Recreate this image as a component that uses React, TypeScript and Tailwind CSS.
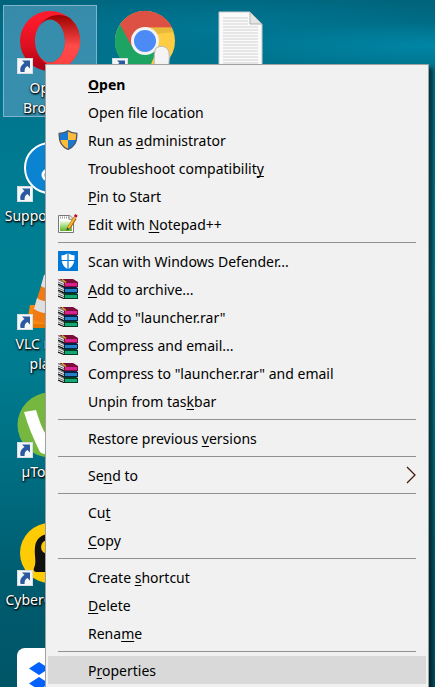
import type { ReactNode } from "react";
import clsx from "clsx";

const ShortcutArrow = () => (
	<g>
		<rect x="0" y="48" width="16" height="16" fill="#f4f6f8" />
		<rect x="0.5" y="48.5" width="15" height="15" fill="none" stroke="#d5dde3" />
		<path
			d="M5 50.500H13V58.500L10.400 56C8.300 57.200 7.300 59 7.600 62H3.600C2.500 58.200 4.200 54.800 7.500 53Z"
			fill="#2c5aa0"
		/>
	</g>
);

const OperaIcon = () => (
	<>
		<defs>
			<linearGradient id="operaLeft" x1="0" y1="0" x2="0" y2="1">
				<stop offset="0.1" stopColor="#ff1b2d" />
				<stop offset="0.6" stopColor="#dc1020" />
				<stop offset="1" stopColor="#a70014" />
			</linearGradient>
			<linearGradient id="operaRight" x1="0" y1="0" x2="0" y2="1">
				<stop offset="0" stopColor="#9c0000" />
				<stop offset="0.6" stopColor="#ff4b4b" />
				<stop offset="1" stopColor="#ff4040" />
			</linearGradient>
		</defs>
		<path
			fillRule="evenodd"
			d="M33 1A30 30 0 1 0 33 61A30 30 0 1 0 33 1ZM33 9.500C41 9.500 48 19 48 31C48 43 41 52.500 33 52.500C25 52.500 18 43 18 31C18 19 25 9.500 33 9.500Z"
			fill="url(#operaLeft)"
		/>
		<path
			d="M22.500 15.500C27 9 34 5 41 5C47 5 51 6.500 54 9A30 30 0 0 1 53 53.500C49 56 45 57.500 40 57C33 56.500 27 53 22.500 46.500C26 50.500 29.500 52.500 33 52.500C41 52.500 48 43 48 31C48 19 41 9.500 33 9.500C29.500 9.500 26 11.500 22.500 15.500Z"
			fill="url(#operaRight)"
		/>
	</>
);

const ChromeIcon = () => (
	<>
		<circle cx="33" cy="31" r="30" fill="#ffcd42" />
		<path d="M33 31L8 14.500A30 30 0 0 0 36 61L46 38Z" fill="#1da462" />
		<path d="M8 14.500A30 30 0 0 1 60 17.500H33L20 37Z" fill="#dd5145" />
		<path d="M33 17.500H60L62 22L45 24Z" fill="#c79a2e" opacity="0.4" />
		<circle cx="33" cy="31" r="14" fill="#f3f3f3" />
		<circle cx="33" cy="31" r="11" fill="#4c8bf5" />
		<path
			d="M44 38C49 35 55 36 57 42C58 49 56 55 57 64H42C43 55 41 43 44 38Z"
			fill="#f4f4f4"
			stroke="#b9b9b9"
		/>
	</>
);

const TextFileIcon = () => (
	<>
		<path d="M12 2H43L55 14V62H12Z" fill="#fafafa" stroke="#c9c9c9" />
		<path
			d="M16 8H41M16 11H41M16 14H41M16 17H51M16 20H51M16 23H51M16 26H51M16 29H51M16 32H51M16 35H51M16 38H51M16 41H51M16 44H51M16 47H51M16 50H51M16 53H51"
			stroke="#d2d2d2"
		/>
		<path d="M43 2V14H55Z" fill="#e4e4e4" stroke="#b0b0b0" />
	</>
);

const SupportIcon = () => (
	<>
		<circle cx="33" cy="30" r="25" fill="#0a84d0" stroke="#fff" strokeWidth="2" />
		<circle cx="31" cy="37" r="5" fill="none" stroke="#fff" strokeWidth="3" />
		<path d="M36 32V20" stroke="#fff" strokeWidth="3" />
	</>
);

const VlcIcon = () => (
	<>
		<path d="M13 39H53L60 62H9Z" fill="#f58a0c" />
		<path d="M9 58H60V62H9Z" fill="#e57700" />
		<path d="M30 1H36L51 52C43 59 23 59 14 52Z" fill="#f27a12" />
		<path d="M27 9H39L42 20C37 23 28 23 24 20Z" fill="#e2e2e2" />
		<path d="M20 32C27 37 39 37 46 32L49 44C41 49 25 49 17 43Z" fill="#dedede" />
	</>
);

const TorrentIcon = () => (
	<>
		<circle cx="33" cy="31" r="32.500" fill="#76b83f" />
		<path
			d="M7 18L19 16C22 26 25 35 30 42C36 46 42 42 41 34L35 14L47 12L58 50L40 56C36 60 28 62 23 58C17 46 11 32 7 18Z"
			fill="#fff"
		/>
	</>
);

const GhostIcon = () => (
	<>
		<circle cx="33" cy="31" r="30" fill="#ffcb05" />
		<path
			d="M17 46C20 40 17 34 18 25C19 16 25 12 33 12C42 12 48 18 48 27V50H20C18 50 16 49 17 46Z"
			fill="#111"
		/>
		<circle cx="31" cy="25" r="7" fill="#ffcb05" />
	</>
);

const DropboxIcon = () => (
	<>
		<rect x="0" y="-2" width="66" height="66" rx="8" fill="#fff" />
		<path
			d="M22 12L32 18.500L22 25L12 18.500ZM44 12L54 18.500L44 25L34 18.500ZM22 27L32 33.500L22 40L12 33.500ZM44 27L54 33.500L44 40L34 33.500ZM33 42L43 48.500L33 55L23 48.500Z"
			fill="#0061ff"
		/>
	</>
);

const ShieldIcon = () => (
	<svg viewBox="0 0 20 20" className="size-5" aria-hidden="true">
		<path d="M10 0.500C7.500 2.500 4.500 3.300 1.200 3.300V10H10Z" fill="#1979d2" />
		<path d="M10 0.500C12.500 2.500 15.500 3.300 18.800 3.300V10H10Z" fill="#fdbc3b" />
		<path d="M1.200 10C2 14.500 5.500 17.800 10 19.500V10Z" fill="#fdbc3b" />
		<path d="M18.800 10C18 14.500 14.500 17.800 10 19.500V10Z" fill="#1979d2" />
		<path
			d="M10 0.800C7.500 2.700 4.500 3.400 1.200 3.400C0.800 10.500 2.500 16.500 10 19.300C17.500 16.500 19.200 10.500 18.800 3.400C15.500 3.400 12.500 2.700 10 0.800Z"
			fill="none"
			stroke="#4d5660"
			strokeWidth="1.300"
		/>
	</svg>
);

const NotepadIcon = () => (
	<svg viewBox="0 0 20 20" className="size-5" aria-hidden="true">
		<defs>
			<linearGradient id="notepadPage" x1="0" y1="0" x2="0" y2="1">
				<stop offset="0" stopColor="#f2fbe0" />
				<stop offset="1" stopColor="#58b81e" />
			</linearGradient>
		</defs>
		<path d="M0.500 1.500H12L15.500 5V18.500H0.500Z" fill="#fff" stroke="#777" />
		<rect x="2" y="7" width="12" height="10" fill="url(#notepadPage)" />
		<path d="M2 3.500H11" stroke="#999" strokeWidth="2" strokeDasharray="1 1" />
		<path d="M11 1.500V5.500H15.500" fill="#ddd" stroke="#999" />
		<path d="M10.500 14.500L17 4" stroke="#a05f10" strokeWidth="3.500" />
		<path d="M10.500 14L17 3.500" stroke="#f9b62c" strokeWidth="2.200" />
		<path d="M17 3L18.500 0.800" stroke="#b5122a" strokeWidth="3" />
		<path d="M8.300 16.800L9 13.500L11.500 15.200Z" fill="#444" />
	</svg>
);

const DefenderIcon = () => (
	<svg viewBox="0 0 20 20" className="size-5" aria-hidden="true">
		<rect width="20" height="20" fill="#0078d7" />
		<path
			d="M10 2C8 3.700 5.700 4.300 3.500 4.300C3.200 10.500 4.500 15.500 10 18C15.500 15.500 16.800 10.500 16.500 4.300C14.300 4.300 12 3.700 10 2Z"
			fill="#fff"
		/>
		<path d="M10 2V18M3 9.500H17" stroke="#0078d7" strokeWidth="1.200" />
	</svg>
);

// one volume of the stack: slanted page edges on the left, spine in front
const Book = ({ y, cover, dark }: { y: number; cover: string; dark: string }) => (
	<g>
		<path d={`M0 ${y}L7 ${y + 3}V${y + 8}L0 ${y + 5}Z`} fill="#f0f0f0" />
		<path
			d={`M0 ${y + 0.5}L7 ${y + 4}M0 ${y + 3}L7 ${y + 6}`}
			stroke="#444"
			strokeWidth="0.800"
		/>
		<path d={`M0 ${y + 5}L7 ${y + 8}`} stroke="#111" strokeWidth="1.200" />
		<path d={`M1 ${y}H15L20 ${y + 3}H6Z`} fill={dark} />
		<path d={`M6 ${y + 3}H20V${y + 8}H6Z`} fill={dark} />
		<path d={`M7 ${y + 4}H19V${y + 7}H7Z`} fill={cover} />
	</g>
);

const WinRarIcon = () => (
	<svg viewBox="0 0 20 20" className="size-5" aria-hidden="true">
		<Book y={12} cover="#12a878" dark="#063d20" />
		<Book y={6} cover="#2480c4" dark="#07224a" />
		<Book y={0} cover="#d6248c" dark="#7a0f3c" />
		<path d="M4 0.500L8 3.500" stroke="#d8b01c" strokeWidth="1.500" />
	</svg>
);

const DesktopIcon = ({
	name,
	caption,
	selected,
	shortcut = true,
	children,
}: {
	name: string;
	caption?: string;
	selected?: boolean;
	shortcut?: boolean;
	children: ReactNode;
}) => (
	<button
		type="button"
		aria-label={name}
		className={clsx(
			"flex h-28 w-full flex-col items-center gap-1 border pt-1",
			selected ? "border-[#7fb4cb] bg-[#4f9abb]/70" : "border-transparent"
		)}>
		<svg
			viewBox="0 0 66 64"
			className="h-16 w-[66px] shrink-0 overflow-visible"
			aria-hidden="true">
			{children}
			{shortcut && <ShortcutArrow />}
		</svg>
		{caption && (
			<span className="text-center text-sm leading-5 text-white [text-shadow:1px_1px_2px_#000,0_1px_2px_#000]">
				{caption}
			</span>
		)}
	</button>
);

type Item = {
	// the letter after "&" is the access key
	text: string;
	icon?: ReactNode;
	bold?: boolean;
	active?: boolean;
	submenu?: boolean;
};

const groups: Item[][] = [
	[
		{ text: "&Open", bold: true },
		{ text: "Open file location" },
		{ text: "Run as &administrator", icon: <ShieldIcon /> },
		{ text: "Troubleshoot compatibilit&y" },
		{ text: "&Pin to Start" },
		{ text: "Edit with &Notepad++", icon: <NotepadIcon /> },
	],
	[
		{ text: "Scan with Windows Defender...", icon: <DefenderIcon /> },
		{ text: "&Add to archive...", icon: <WinRarIcon /> },
		{ text: 'Add &to "launcher.rar"', icon: <WinRarIcon /> },
		{ text: "Compress and email...", icon: <WinRarIcon /> },
		{ text: 'Compress to "launcher.rar" and email', icon: <WinRarIcon /> },
		{ text: "Unpin from tas&kbar" },
	],
	[{ text: "Restore previous &versions" }],
	[{ text: "Se&nd to", submenu: true }],
	[{ text: "Cu&t" }, { text: "&Copy" }],
	[{ text: "Create &shortcut" }, { text: "&Delete" }, { text: "Rena&me" }],
	[{ text: "P&roperties", active: true }],
];

const ItemText = ({ text }: { text: string }) => {
	const at = text.indexOf("&");
	if (at < 0) return <>{text}</>;
	return (
		<>
			{text.slice(0, at)}
			<span className="underline decoration-1 underline-offset-2 [text-decoration-skip-ink:none]">
				{text[at + 1]}
			</span>
			{text.slice(at + 2)}
		</>
	);
};

const MenuItem = ({ text, icon, bold, active, submenu }: Item) => (
	<button
		type="button"
		role="menuitem"
		className={clsx(
			"flex h-7 w-full items-center gap-2.5 px-2.5 text-left",
			bold && "font-bold",
			active && "bg-[#d9d9d9]"
		)}>
		<span className="size-5 shrink-0">{icon}</span>
		<span className="flex-1 pt-0.5 whitespace-nowrap">
			<ItemText text={text} />
		</span>
		{submenu && (
			<svg
				viewBox="0 0 10 18"
				className="h-[18px] w-2.5"
				fill="none"
				aria-hidden="true">
				<path d="M1 1L9 9L1 17" stroke="#4a1a10" strokeWidth="1.300" />
			</svg>
		)}
	</button>
);

const ContextMenu = () => (
	<div
		role="menu"
		className="absolute top-16 right-1.5 left-[45px] border border-[#a0a0a0] bg-[#f1f1f1] px-0.5 py-[5px] text-sm text-black shadow-[4px_4px_4px_rgba(0,0,0,0.55)]">
		{groups.map((items, i) => (
			<div key={i}>
				{i > 0 && <hr className="mx-2.5 my-1 border-[#919191]" />}
				{items.map((item) => (
					<MenuItem key={item.text} {...item} />
				))}
			</div>
		))}
	</div>
);

const App = () => (
	<main className="relative h-screen overflow-hidden bg-[radial-gradient(ellipse_220px_24px_at_100%_46px,#0086a5,transparent),radial-gradient(ellipse_260px_40px_at_50%_30px,#007795,transparent),linear-gradient(#00647b,#00728c_9%,#007b91_25%,#008093_42%,#007a8e_55%,#006c80_70%,#005c6f_85%,#005566)] font-['Noto_Sans','Open_Sans',sans-serif]">
		<div className="grid grid-flow-col grid-cols-[94px_94px_94px] grid-rows-[repeat(6,112px)] gap-x-px gap-y-4 pt-[5px] pl-[3px]">
			<DesktopIcon name="Opera Browser" caption="Opera Browser" selected>
				<OperaIcon />
			</DesktopIcon>
			<DesktopIcon name="SupportAssist" caption="SupportAssist">
				<SupportIcon />
			</DesktopIcon>
			<DesktopIcon name="VLC media player" caption="VLC media player">
				<VlcIcon />
			</DesktopIcon>
			<DesktopIcon name="µTorrent" caption="µTorrent">
				<TorrentIcon />
			</DesktopIcon>
			<DesktopIcon name="CyberGhost 6" caption="CyberGhost 6">
				<GhostIcon />
			</DesktopIcon>
			<DesktopIcon name="Dropbox" shortcut={false}>
				<DropboxIcon />
			</DesktopIcon>
			<DesktopIcon name="Chrome">
				<ChromeIcon />
			</DesktopIcon>
			<div className="col-start-3 row-start-1">
				<DesktopIcon name="Text file" shortcut={false}>
					<TextFileIcon />
				</DesktopIcon>
			</div>
		</div>
		<ContextMenu />
	</main>
);

export default App;
